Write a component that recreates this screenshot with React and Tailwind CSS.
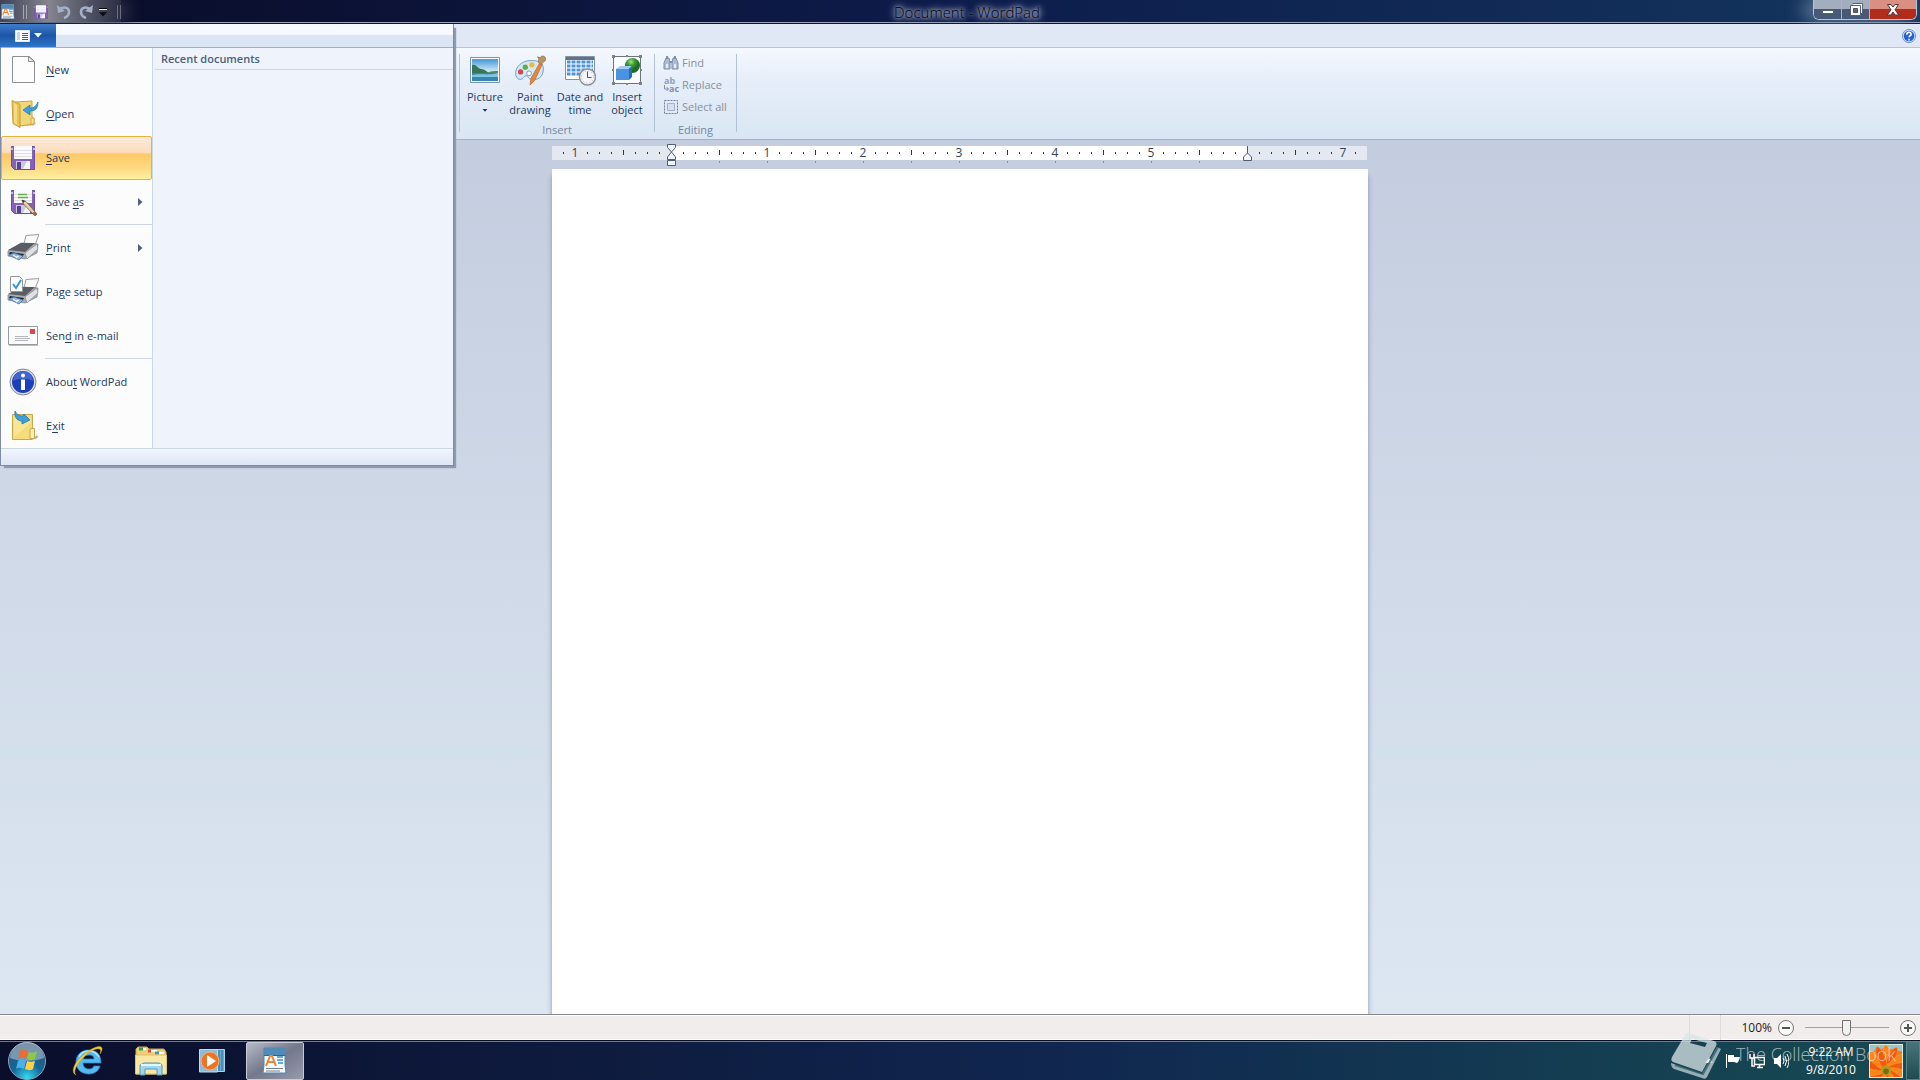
const INCH = 96
const ZERO = 119

function WordPadIcon({ className }) {
  return (
    <svg viewBox="0 0 24 28" className={className} aria-hidden="true">
      <path d="M1 1h21v17l1 8H0l1-8z" fill="#f4f9fd" stroke="#4d86ad" strokeWidth="1" />
      <path d="M1 1h21v7H1z" fill="#4f8cb8" />
      <path d="M1 8h21v1H1z" fill="#2f6590" />
      <path d="M3 19 7 9h2l4 10M5 15h6" fill="none" stroke="#e8863c" strokeWidth="2" />
      <path d="M14 10h6M14 13h6M15 16h5" stroke="#3e8cc8" strokeWidth="1.500" />
      <path d="M3 21.500h17M3 24h14" stroke="#777f88" strokeWidth="1" />
    </svg>
  )
}

function FloppyIcon({ className, pencil }) {
  return (
    <svg viewBox="0 0 32 32" className={className} aria-hidden="true">
      <path d="M4.500 4.500h23v23h-20l-3-3z" fill="#8560bd" stroke="#6b4fa3" />
      <path d="M7 4h18v13H7z" fill="#fafafd" />
      <path d="M7 8.500h18M7 11.500h18M7 14.500h18" stroke="#dedee6" />
      <path d="M9 19h14v8H9z" fill="#c9cbd8" />
      <path d="M10 20h4v7h-4z" fill="#5b4290" />
      <path d="M16 27l4-8h3v8z" fill="#f4f5fa" />
      <path d="M4 7h2M26 7h2" stroke="#cdb9ec" strokeWidth="2" />
      {pencil && (
        <g>
          <path d="M11 8.500h9M11 11.500h10" stroke="#5fb04d" strokeWidth="1.500" />
          <path d="M15 14l4 1.500 11 12.500-2 2-11.500-12z" fill="#e8d49c" stroke="#6f5a35" strokeWidth=".800" />
          <path d="M15 14l3 1-2 2z" fill="#333" />
          <path d="M27.500 25.500l2.500 3-1.500 1.500-3-3z" fill="#a65f50" />
        </g>
      )}
    </svg>
  )
}

function NewIcon() {
  return (
    <svg viewBox="0 0 32 32" className="size-8" aria-hidden="true">
      <path d="M5.500 2.500h17l5 5v21h-22z" fill="#fdfdfd" stroke="#8e9094" />
      <path d="M21.500 2.500v5h6z" fill="#e9ebee" stroke="#8e9094" />
    </svg>
  )
}

function OpenIcon() {
  return (
    <svg viewBox="0 0 32 32" className="size-8" aria-hidden="true">
      <path d="M8 28h18c3-1 4-3 2-4l-4-2z" fill="#9a9a92" opacity=".4" />
      <path d="M8 4l17-1v16l2 1v6l-14 2z" fill="#f2d77a" stroke="#cba441" />
      <path d="M5 2.500l8 4v23l-7-4z" fill="#e9c453" stroke="#c79e34" />
      <path d="M7 5l3 2v20l-3-2z" fill="#f8e598" opacity=".7" />
      <path d="M24 20h3v6h-3z" fill="#f8e69c" stroke="#d0aa4c" />
      <path d="M16 12l7-5v3c4 0 6-2 8-6 0 7-3 9-8 9v4z" fill="#3aa0da" stroke="#2277aa" strokeWidth=".700" />
    </svg>
  )
}

function PrinterIcon({ page }) {
  return (
    <svg viewBox="0 0 32 32" className="size-8" aria-hidden="true">
      <path d="M19 3.500l13-1-5 13h-11z" fill="#fafafa" stroke="#999da2" />
      <path d="M1 19l13-8 17 1-1 9-12 6-17-3z" fill="#a9adb2" stroke="#787d83" strokeWidth=".700" />
      <path d="M1 18l13-7h14l-10 9z" fill="#5a5e64" />
      <path d="M18 21l12-9 1 5-11 10z" fill="#dfe1e4" stroke="#85898d" strokeWidth=".700" />
      <path d="M3 20l14 2-1 2-14-2z" fill="#24272c" />
      <path d="M2 23l5-2 9 3-4 4z" fill="#8eb7e4" stroke="#4775ad" strokeWidth=".800" />
      <path d="M6 23l3 2 2-1M9 26l3-2" fill="none" stroke="#fff" />
      {page && (
        <g>
          <path d="M3.500.500h9l3 3v12h-12z" fill="#fff" stroke="#92969b" />
          <path d="M6 8l3 4 5-8" fill="none" stroke="#3699cb" strokeWidth="2" />
        </g>
      )}
    </svg>
  )
}

function MailIcon() {
  return (
    <svg viewBox="0 0 32 32" className="size-8" aria-hidden="true">
      <path d="M2 25.500h29" stroke="#bdbdbd" />
      <path d="M1.500 6.500h29v18h-29z" fill="#fbfbfb" stroke="#98999d" />
      <path d="M23 9h5v5h-5z" fill="#d94b4b" />
      <path d="M8 16.500h13M8 18.500h15M8 20.500h13" stroke="#b5b6ba" />
    </svg>
  )
}

function InfoIcon() {
  return (
    <svg viewBox="0 0 32 32" className="size-8" aria-hidden="true">
      <circle cx="16" cy="16" r="13" fill="#d9dee8" stroke="#848b99" />
      <circle cx="16" cy="16" r="11" fill="#1c3fba" />
      <path d="M6 15a10 10 0 0 1 20 0c-5-3-14-3-20 0z" fill="#5076dd" opacity=".7" />
      <circle cx="16" cy="9.500" r="2" fill="#fff" />
      <path d="M14 13.500h4V24h-4z" fill="#fff" />
    </svg>
  )
}

function ExitIcon() {
  return (
    <svg viewBox="0 0 32 32" className="size-8" aria-hidden="true">
      <path d="M27 28l3-3 1 2-2 2z" fill="#aaa" />
      <path d="M5.500 4.500h20v25h-20z" fill="#f6dc79" stroke="#c9a74b" />
      <path d="M7 8h17v5L7 27z" fill="#faeaa0" opacity=".7" />
      <path d="M24 18.500h3.500v10H23V20z" fill="#fbf0bd" stroke="#c9a74b" />
      <path d="M8 1c2 4 5 5 8 5l1-2 6 6-8 4v-3C10 11 7 7 8 1z" fill="#3da0dc" stroke="#236fa5" strokeWidth=".700" />
    </svg>
  )
}

function PictureIcon() {
  return (
    <svg viewBox="0 0 32 32" className="size-8" aria-hidden="true">
      <defs>
        <linearGradient id="sky" x2="0" y2="1">
          <stop offset="0" stopColor="#4398d8" />
          <stop offset="1" stopColor="#e2f4fa" />
        </linearGradient>
      </defs>
      <path d="M1.500 3.500h29v25h-29z" fill="#fff" stroke="#7893aa" />
      <path d="M3 5h26v14H3z" fill="url(#sky)" />
      <path d="M3 19h26v8H3z" fill="#3685b5" />
      <path d="M3 21c8-2 16 1 26-2v4H3z" fill="#7fc6dc" />
      <path d="M3 11c4-1 5 3 9 4 3 0 5 2 8 4H3z" fill="#387556" />
      <path d="M18 19c3-2 7-2 11-2v2z" fill="#508b68" />
    </svg>
  )
}

function PaintIcon() {
  return (
    <svg viewBox="0 0 34 32" className="h-8 w-8" aria-hidden="true">
      <path d="M2 22C0 12 10 5 20 6c9 0 12 5 11 11-1 7-6 10-12 9-4 0-4-4-6-4-3 0-3 4-6 4-3 0-4-2-5-4z" fill="#d4e9f8" stroke="#6b9bc0" />
      <circle cx="7" cy="18" r="2.800" fill="#d54848" />
      <circle cx="12" cy="13" r="2.800" fill="#62ad3e" />
      <circle cx="19" cy="10.500" r="2.800" fill="#e9bb3d" />
      <circle cx="16" cy="19.500" r="2.500" fill="#fff" stroke="#6b9bc0" />
      <path d="M27 9l3 1-8 17-5 5 1-7z" fill="#e8863a" stroke="#b6602a" strokeWidth=".700" />
      <path d="M26 8c0-3 1-3-1-6l3 1c1-3 5-2 6 1 0 3-3 3-5 6z" fill="#bd9461" stroke="#8a673e" strokeWidth=".700" />
    </svg>
  )
}

function DateIcon() {
  return (
    <svg viewBox="0 0 32 32" className="size-8" aria-hidden="true">
      <path d="M1.500 2.500h29v23h-29z" fill="#fff" stroke="#8093a8" />
      <path d="M2 3h28v3H2z" fill="#66717d" />
      <path d="M3 8h26M3 12h26M3 16h26M3 20h26" stroke="#4e93dd" strokeWidth="2.800" />
      <path d="M7 6v17M12 6v17M17 6v17M22 6v17M27 6v17" stroke="#fff" />
      <circle cx="23.500" cy="23" r="8" fill="#f4f5f6" stroke="#8c9195" strokeWidth="1.500" />
      <circle cx="23.500" cy="23" r="6" fill="none" stroke="#b0b4b8" strokeDasharray="1 2.140" />
      <path d="M23.500 17.500v6h4" fill="none" stroke="#53575c" />
    </svg>
  )
}

function ObjectIcon() {
  return (
    <svg viewBox="0 0 32 32" className="size-8" aria-hidden="true">
      <defs>
        <radialGradient id="ball" cx=".4" cy=".25">
          <stop offset="0" stopColor="#a3e582" />
          <stop offset=".5" stopColor="#3a9f35" />
          <stop offset="1" stopColor="#1c7026" />
        </radialGradient>
      </defs>
      <path d="M2.500 2.500h27v27h-27z" fill="#fbfcfe" stroke="#6f757d" />
      <path d="M1 1h3v3H1zM15 1h2v2h-2zM28 1h3v3h-3zM1 15h2v2H1zM29 15h2v2h-2zM1 28h3v3H1zM15 29h2v2h-2zM28 28h3v3h-3z" fill="#7d838b" />
      <circle cx="21.500" cy="11.500" r="7.500" fill="url(#ball)" />
      <path d="M5 15l4-3h12l-3 3z" fill="#9fccf7" />
      <path d="M5 15h13v11H5z" fill="#4b93e2" />
      <path d="M18 15l3-3v11l-3 3z" fill="#276cba" />
    </svg>
  )
}

function FindIcon() {
  return (
    <svg viewBox="0 0 16 16" className="size-4" aria-hidden="true">
      <path d="M1 14V8l2-5h3l1 5v6zM9 14V8l1-5h3l2 5v6z" fill="#aebdd2" stroke="#7c8daa" />
      <path d="M4 1v3M12 1v3M7 7h2" stroke="#7c8daa" strokeWidth="2" />
      <path d="M3 9h2v4H3zM11 9h2v4h-2z" fill="#e5ebf3" />
    </svg>
  )
}

function ReplaceIcon() {
  return (
    <svg viewBox="0 0 16 16" className="size-4 overflow-visible" aria-hidden="true">
      <text x="1" y="7" fontSize="9" fontWeight="700" fill="#8fa0bd">ab</text>
      <text x="6" y="15" fontSize="9" fontWeight="700" fill="#8091b0">ac</text>
      <path d="M1.500 8v4h4M3.500 10l2 2-2 2" fill="none" stroke="#8091b0" />
    </svg>
  )
}

function SelectAllIcon() {
  return (
    <svg viewBox="0 0 16 16" className="size-4" aria-hidden="true">
      <path d="M1.500 1.500h13v13h-13z" fill="none" stroke="#6f7f99" strokeDasharray="2 1" />
      <path d="M4.500 4.500h7v7h-7z" fill="#d8e0ec" stroke="#a3b0c6" />
    </svg>
  )
}

function UndoIcon({ flip }) {
  return (
    <svg viewBox="0 0 16 16" className={flip ? 'size-4 -scale-x-100' : 'size-4'} aria-hidden="true">
      <path d="M4 5c5-3 9-1 9 3 0 3-2 5-5 6" fill="none" stroke="#a3b2c9" strokeWidth="2.600" />
      <path d="M1 1l1 8 7-2z" fill="#a3b2c9" />
    </svg>
  )
}

function CaretDown({ className }) {
  return (
    <svg viewBox="0 0 8 5" className={className} aria-hidden="true">
      <path d="M0 0h8L4 4.500z" fill="currentColor" />
    </svg>
  )
}

function TitleBar() {
  return (
    <header className="flex h-6 shrink-0 items-center border-b border-[#10142b] bg-linear-to-r from-[#0a0c28] via-[#0d1c4b] to-[#14365e] text-[#0a0d1a] shadow-[inset_0_-1px_0_#9aa3b8]">
      <div className="flex h-[22px] w-[121px] items-center gap-1 self-start bg-linear-to-r from-[#3f4256] via-[#85858f] via-40% to-[#2b2d43] pt-0.5 pl-px shadow-[8px_0_14px_#2b2d43]">
        <WordPadIcon className="h-4 w-3.5" />
        <span className="mr-px ml-1 h-3.5 w-1 border-x border-[#a5a6b0]" />
        <button aria-label="Save"><FloppyIcon className="size-[18px]" /></button>
        <button aria-label="Undo" className="pl-0.5"><UndoIcon /></button>
        <button aria-label="Redo" className="pl-0.5"><UndoIcon flip /></button>
        <button aria-label="Customize Quick Access Toolbar" className="flex flex-col items-center gap-0.5 pl-px">
          <span className="h-0.5 w-2 border-b border-white bg-black" />
          <CaretDown className="h-[5px] w-2" />
        </button>
        <span className="ml-1.5 h-3.5 w-1 shrink-0 border-x border-[#6c6f80]" />
      </div>
      <h1 className="flex-1 text-center text-[15px]/5 font-light">
        <span className="text-black [text-shadow:0_0_3px_#aab1c8,0_0_5px_#a2aac3,0_0_7px_#9ba3bd,0_0_9px_#8c95b2,0_0_12px_#8c95b2]">Document - WordPad</span>
      </h1>
      <div className="mr-[3px] flex h-5 self-start overflow-hidden rounded-b-md border border-t-0 border-[#b9c4d3] shadow-[-8px_0_20px_#718aa8]">
        <button aria-label="Minimize" className="flex w-7 items-center justify-center border-r border-[#a8b5c7] bg-linear-to-b from-[#a2aec0] from-45% to-[#465a78] to-50%">
          <svg viewBox="0 0 14 12" className="h-3 w-3.5"><path d="M1.500 6.500h11v3h-11z" fill="#fff" stroke="#565f70" /></svg>
        </button>
        <button aria-label="Restore" className="flex w-7 items-center justify-center border-r border-[#a8b5c7] bg-linear-to-b from-[#a2aec0] from-45% to-[#465a78] to-50%">
          <svg viewBox="0 0 14 14" className="size-3.5">
            <path d="M3.500.500h10v10h-2" fill="#fff" stroke="#565f70" />
            <path d="M1.500 2.500h10v10h-10z" fill="#fff" stroke="#565f70" />
            <path d="M4.500 5.500h4v4h-4z" fill="#5b6a80" stroke="#465368" />
          </svg>
        </button>
        <button aria-label="Close" className="flex w-[46px] items-center justify-center bg-linear-to-b from-[#d98f82] from-45% to-[#b22c1b] to-50%">
          <svg viewBox="0 0 14 12" className="h-3 w-3.5">
            <path d="M1.500.500h3.500l2 2.500 2-2.500h3.500L9 5.800l3.800 5.200H9L7 8l-2 3H1.200L5 5.800z" fill="#fff" stroke="#5e3237" />
          </svg>
        </button>
      </div>
    </header>
  )
}

function BigButton({ icon, lines, caret, className }) {
  return (
    <button className={`flex flex-col items-center text-[11px]/[13px] text-[#1e395b] ${className}`}>
      {icon}
      <span className="mt-1">{lines[0]}</span>
      {lines[1] && <span>{lines[1]}</span>}
      {caret && <CaretDown className="mt-1.5 h-[3px] w-1.5" />}
    </button>
  )
}

function SmallButton({ icon, label }) {
  return (
    <button className="flex h-[22px] items-center gap-[3px] text-[11px]/4 text-[#8a8f98]">
      {icon}
      {label}
    </button>
  )
}

function Divider() {
  return <span className="mt-0.5 h-[78px] w-px bg-[#b3c1d5]" />
}

function Ribbon() {
  return (
    <section>
      <div className="flex h-6 items-center justify-end border-b border-[#b7c5da] bg-[#dfe8f4] pr-1">
        <button aria-label="Help">
          <svg viewBox="0 0 16 16" className="size-3.5">
            <circle cx="8" cy="8" r="7.500" fill="#d7e3fa" stroke="#6387cf" />
            <circle cx="8" cy="8" r="6" fill="#2560d4" />
            <path d="M5.500 6.500c0-3.500 5-3.500 5-.500 0 2-2.500 1.500-2.500 3.500M8 11v2" fill="none" stroke="#fff" strokeWidth="1.800" />
          </svg>
        </button>
      </div>
      <div className="flex h-[92px] border-b border-[#a3b2c7] bg-linear-to-b from-[#f5f9ff] via-[#e6eef9] via-35% to-[#dae6f4] pt-1 pb-[3px] pl-[459px]">
        <Divider />
        <div className="flex w-[194px] flex-col items-center">
          <div className="flex w-full flex-1 items-start pt-0.5 pl-[3px]">
            <BigButton className="w-11" icon={<PictureIcon />} lines={['Picture']} caret />
            <BigButton className="w-[46px]" icon={<PaintIcon />} lines={['Paint', 'drawing']} />
            <BigButton className="w-[54px]" icon={<DateIcon />} lines={['Date and', 'time']} />
            <BigButton className="w-10" icon={<ObjectIcon />} lines={['Insert', 'object']} />
          </div>
          <div className="text-[11px]/3 text-[#7586a0]">Insert</div>
        </div>
        <Divider />
        <div className="flex w-[81px] flex-col items-center">
          <div className="w-full flex-1 pl-2">
            <SmallButton icon={<FindIcon />} label="Find" />
            <SmallButton icon={<ReplaceIcon />} label="Replace" />
            <SmallButton icon={<SelectAllIcon />} label="Select all" />
          </div>
          <div className="text-[11px]/3 text-[#7586a0]">Editing</div>
        </div>
        <Divider />
      </div>
    </section>
  )
}

function Ruler() {
  const ticks = []
  for (let i = -9; i <= 57; i++) {
    if (i === 0 || i === 48) continue
    const x = ZERO + i * 12
    if (i % 8 === 0) {
      ticks.push(
        <text key={i} x={x} y="17" textAnchor="middle" fontSize="12" fill="#34415c">
          {Math.abs(i / 8)}
        </text>
      )
    } else {
      const half = i % 4 === 0
      ticks.push(<rect key={i} x={x} y={half ? 10 : 12} width="1" height={half ? 5 : 2} fill="#2e3442" />)
    }
    if (i > 0 && i < 48 && i % 4 === 0) {
      ticks.push(<rect key={`tab${i}`} x={x} y="21" width="1" height="2" fill="#8593a9" />)
    }
  }

  return (
    <svg viewBox="0 0 816 29" className="mx-auto block h-[29px] w-[816px] shrink-0" role="img" aria-label="Ruler">
      <rect y="6" width="815" height="14" fill="#e4e8f0" />
      <rect x={ZERO} y="6" width={6 * INCH} height="14" fill="#fff" />
      {ticks}
      <g fill="#f2f6fc" stroke="#4f5e78">
        <path d="M115.500 4.500h8v3l-4 4.500-4-4.500z" />
        <path d="M119.500 12l4 5v2.500h-8V17z" />
        <path d="M115.500 20.500h8v5h-8z" />
        <path d="M695.500 6v7" />
        <path d="M695.500 13l4 4v3.500h-8V17z" />
      </g>
    </svg>
  )
}

const menuItems = [
  { icon: <NewIcon />, before: '', key: 'N', after: 'ew' },
  { icon: <OpenIcon />, before: '', key: 'O', after: 'pen' },
  { icon: <FloppyIcon className="size-8" />, before: '', key: 'S', after: 'ave', active: true },
  { icon: <FloppyIcon className="size-8" pencil />, before: 'Save ', key: 'a', after: 's', arrow: true, line: true },
  { icon: <PrinterIcon />, before: '', key: 'P', after: 'rint', arrow: true },
  { icon: <PrinterIcon page />, before: 'Pa', key: 'g', after: 'e setup' },
  { icon: <MailIcon />, before: 'Sen', key: 'd', after: ' in e-mail', line: true },
  { icon: <InfoIcon />, before: 'Abou', key: 't', after: ' WordPad' },
  { icon: <ExitIcon />, before: 'E', key: 'x', after: 'it' },
]

function MenuItem({ item }) {
  return (
    <li>
      <button
        className={`flex h-11 w-full items-center rounded-xs border pl-[5px] text-[11px]/4 text-[#1e395b] ${
          item.active
            ? 'border-[#e3b53c] bg-[linear-gradient(#fbeade,#fbdcb8_38%,#fdc965_40%,#fed77e_70%,#fff0a0)]'
            : 'border-transparent'
        }`}
      >
        {item.icon}
        <span className="flex-1 pl-[7px] text-left whitespace-pre">
          {item.before}
          <span className="underline underline-offset-2">{item.key}</span>
          {item.after}
        </span>
        {item.arrow && (
          <svg viewBox="0 0 5 8" className="mr-2 h-2 w-[5px]" aria-hidden="true">
            <path d="M0 0l4.500 4L0 8z" fill="#52617c" />
          </svg>
        )}
      </button>
      {item.line && <div className="ml-11 h-0.5 border-t border-[#cdd6e3]" />}
    </li>
  )
}

function FileMenu() {
  return (
    <div className="absolute top-6 left-0 z-10 w-[454px] border-r border-b border-l border-[#7d8ba5] bg-[#eff4fc] shadow-[3px_3px_1px_-1px_#8e9ab0]">
      <div className="h-6 border-b border-[#9fb0cb] bg-linear-to-b from-[#f6f9ff] from-45% to-[#dbe5f4] to-50%">
        <button
          aria-label="WordPad menu"
          className="-ml-px flex h-[23px] w-14 items-center justify-center gap-1 bg-linear-to-b from-[#3f7dc8] via-[#1c55a8] via-50% to-[#2f76c9] text-white"
        >
          <svg viewBox="0 0 15 12" className="h-3 w-[15px]">
            <path d="M.500.500h14v11H.500z" fill="#fff" stroke="#dfe9f8" />
            <path d="M2 2h3v8H2z" fill="#c5d6ee" />
            <path d="M7 3.500h6M7 5.500h6M7 7.500h6M7 9.500h6" stroke="#2a5ca8" />
          </svg>
          <CaretDown className="h-[5px] w-2" />
        </button>
      </div>
      <div className="flex">
        <ul className="w-[152px] border-r border-[#cdd6e3] bg-[#fcfcfd]">
          {menuItems.map((item, index) => (
            <MenuItem key={index} item={item} />
          ))}
        </ul>
        <div className="flex-1 pl-0.5">
          <h2 className="h-[22px] border-b border-[#cdd6e3] pl-1.5 text-[11px]/[22px] font-semibold text-[#4c607a]">Recent documents</h2>
        </div>
      </div>
      <div className="h-[17px] border-t border-[#cdd6e3] bg-linear-to-b from-[#f1f5fd] to-[#dde6f5]" />
    </div>
  )
}

function ZoomButton({ label, plus }) {
  return (
    <button aria-label={label}>
      <svg viewBox="0 0 18 18" className="size-[18px]">
        <circle cx="9" cy="9" r="7.500" fill="#f8f8f8" stroke="#777" />
        <path d={plus ? 'M5 9h8M9 5v8' : 'M5 9h8'} stroke="#555" strokeWidth="2" />
      </svg>
    </button>
  )
}

function StatusBar() {
  return (
    <footer className="flex h-[26px] shrink-0 items-center justify-end border-t border-[#85868f] bg-[#f0edec] pr-[3px] shadow-[inset_0_1px_0_#fff,inset_0_-1px_0_#fff]">
      <div className="h-full w-8 border-x border-[#dfdcdc]" />
      <label htmlFor="zoom" className="w-14 pr-[5px] text-right text-xs/4 text-[#1c1c1c]">100%</label>
      <ZoomButton label="Zoom out" />
      <input
        id="zoom"
        type="range"
        defaultValue="49"
        className="mx-2.5 h-4 w-[84px] appearance-none bg-[linear-gradient(#a2a2a2,#a2a2a2)] bg-[length:100%_1px] bg-center bg-no-repeat [&::-webkit-slider-thumb]:h-4 [&::-webkit-slider-thumb]:w-[9px] [&::-webkit-slider-thumb]:appearance-none [&::-webkit-slider-thumb]:rounded-t-xs [&::-webkit-slider-thumb]:rounded-b-full [&::-webkit-slider-thumb]:border [&::-webkit-slider-thumb]:border-[#707070] [&::-webkit-slider-thumb]:bg-[#f1f1f1]"
      />
      <ZoomButton label="Zoom in" plus />
    </footer>
  )
}

function StartOrb() {
  return (
    <svg viewBox="0 0 40 40" className="size-10" aria-hidden="true">
      <defs>
        <radialGradient id="orb" cx=".5" cy=".95" r=".9">
          <stop offset="0" stopColor="#34dcf5" />
          <stop offset=".45" stopColor="#14679b" />
          <stop offset="1" stopColor="#33516e" />
        </radialGradient>
      </defs>
      <circle cx="20" cy="20" r="18.500" fill="url(#orb)" stroke="#8aa4b8" />
      <path d="M3 17a17 16 0 0 1 34 0c-10 4-24 4-34 0z" fill="#c3d7e2" opacity=".5" />
      <path d="M13 10c3-2 5-1 8 0l-2 8c-3-1-5-2-8 0z" fill="#ef6a35" />
      <path d="M22 11c3 1 5 1 8-1l-2 8c-3 2-5 1-8 0z" fill="#8fc841" />
      <path d="M11 20c3-2 5-1 8 0l-2 8c-3-1-5-2-8 0z" fill="#4bb2ed" />
      <path d="M20 20c3 1 5 1 8 0l-2 8c-3 2-5 1-8 0z" fill="#ffd045" />
    </svg>
  )
}

function ExplorerEIcon() {
  return (
    <svg viewBox="0 0 32 32" className="size-8" aria-hidden="true">
      <path d="M29 21c-1 5-6 8-11 8C10 29 5 24 5 17S10 5 18 5s12 5 12 13H12c0 4 3 6 6 6 3 0 4-1 5-3zM12 14h11c0-3-2-4-5-4s-5 1-6 4z" fill="#56b9ef" stroke="#2c83c6" strokeWidth=".800" />
      <path d="M8 12c2-4 5-6 9-6 5 0 9 2 11 6" fill="none" stroke="#b8e6fc" strokeWidth="1.500" />
      <path d="M5 30c-5-2-3-10 4-17S26 0 30 2c2 1 1 4-1 7 1-3 1-5-1-5-3-1-11 3-17 10-6 6-9 13-6 16z" fill="#f6cd35" stroke="#c99a1f" strokeWidth=".500" />
    </svg>
  )
}

function FolderIcon() {
  return (
    <svg viewBox="0 0 34 32" className="h-8 w-[34px]" aria-hidden="true">
      <path d="M2 4l2-2h9l2 2h15l2 3v22H2z" fill="#efd077" stroke="#c9a64e" />
      <path d="M5 4h7M14 6h9M21 8h9" stroke="#fff" strokeWidth="2" />
      <path d="M5 4h4" stroke="#339955" strokeWidth="3" />
      <path d="M14 6h3" stroke="#d44" strokeWidth="3" />
      <path d="M21 8h4" stroke="#3399cc" strokeWidth="3" />
      <path d="M1.500 10h31v19h-31z" fill="#f9e7a4" stroke="#ddc26c" />
      <path d="M6 30V20l4-2h15l3 2v10h-5v-6H11v6z" fill="#9fd7ee" stroke="#5495bd" />
      <path d="M7 20h20" stroke="#dff6fd" strokeWidth="2" />
    </svg>
  )
}

function MediaIcon() {
  return (
    <svg viewBox="0 0 28 26" className="h-[26px] w-7" aria-hidden="true">
      <path d="M6 1.500h20.500v22H6z" fill="#65a9d0" stroke="#a6d4ec" />
      <path d="M21 2v21M24 2v21" stroke="#2e759f" />
      <path d="M1.500 1.500h18v22.500h-18z" fill="#8bbcd9" stroke="#b9deef" />
      <circle cx="12" cy="13" r="9" fill="#ee7424" stroke="#f7b27c" />
      <path d="M9 7l9 6-9 6z" fill="#fff" />
    </svg>
  )
}

function TrayIcons() {
  return (
    <div className="flex items-center gap-2">
      <svg viewBox="0 0 8 5" className="mr-1 h-[5px] w-2"><path d="M0 5l4-5 4 5z" fill="#fff" /></svg>
      <svg viewBox="0 0 16 16" className="size-4">
        <path d="M1.500 1v14" stroke="#fff" />
        <path d="M3 2h6v2h6c-1 3-1 4-3 6l-3-1H3z" fill="#fff" />
      </svg>
      <svg viewBox="0 0 16 16" className="size-4">
        <path d="M5.500 4.500h10v7h-10zM8 14.500h6M10.500 12v2" fill="#174653" stroke="#fff" strokeWidth="1.500" />
        <path d="M1 1v4h4V1M3 5v8h3" fill="none" stroke="#fff" strokeWidth="1.500" />
      </svg>
      <svg viewBox="0 0 16 16" className="size-4">
        <path d="M1 5h3l4-4v14l-4-4H1z" fill="#fff" />
        <path d="M10 5q2 3 0 6M12 3q3 5 0 10M14 1q4 7 0 14" fill="none" stroke="#fff" />
      </svg>
    </div>
  )
}

function Avatar() {
  const petals = Array.from({ length: 14 }, (_, i) => i * 26)
  return (
    <svg viewBox="0 0 34 34" className="size-[34px] border border-[#dce9dc]" role="img" aria-label="User">
      <rect width="34" height="34" fill="#f27a1c" />
      <path d="M0 0h34v7L17 3 0 7z" fill="#9cc6ce" />
      {petals.map((a, i) => (
        <ellipse key={a} cx="17" cy="13" rx="4" ry="13" fill={i % 2 ? '#f2590f' : '#fb8516'} stroke="#ffae38" strokeWidth=".500" transform={`rotate(${a} 17 26)`} />
      ))}
      <circle cx="17" cy="27" r="5.500" fill="#b59a1d" />
      <circle cx="17" cy="28" r="3" fill="#716d1c" />
    </svg>
  )
}

function Watermark() {
  return (
    <div className="pointer-events-none absolute right-6 bottom-0 z-20 flex h-12 items-center gap-3.5 text-white/60">
      <svg viewBox="0 0 52 48" className="h-12 w-[52px]" aria-hidden="true">
        <path fillRule="evenodd" d="M18 1l26 8c3 1 3 3 2 5L32 40 3 30c-2-1-2-3-1-5L15 3c1-2 2-2 3-2zM22 7l-2 4 15 4 2-4z" fill="#d9e5e8" opacity=".75" />
        <path d="M47 15l4 2-14 28c-1 2-3 2-5 1L4 37c-2-1-3-3-3-6l31 11z" fill="#c4d3d7" opacity=".75" />
        <path d="M5 33l28 9 15-27" fill="none" stroke="#24535f" strokeWidth="2" opacity=".7" />
      </svg>
      <span className="pb-1 text-lg/6 font-light">The Collection Book</span>
    </div>
  )
}

function Taskbar() {
  return (
    <div className="flex h-10 shrink-0 items-center border-t border-[#0a0f24] bg-linear-to-r from-[#0a0e2b] via-[#10264f] via-55% to-[#184b52] shadow-[inset_0_1px_0_#667c98]">
      <button aria-label="Start" className="ml-[7px]"><StartOrb /></button>
      <button aria-label="Internet Explorer" className="ml-6"><ExplorerEIcon /></button>
      <button aria-label="Windows Explorer" className="ml-[31px]"><FolderIcon /></button>
      <button aria-label="Media Player" className="ml-[30px]"><MediaIcon /></button>
      <button
        aria-label="WordPad"
        className="ml-5 flex h-[38px] w-[58px] items-center justify-center rounded-xs border border-[#c8cbd6] bg-linear-to-br from-[#b9bbc7] via-[#74788c] to-[#989bab]"
      >
        <WordPadIcon className="h-7 w-6" />
      </button>
      <div className="ml-auto flex h-full items-center">
        <TrayIcons />
        <div className="w-20 pl-1 text-center text-xs/[18px] text-white">
          <div>9:22 AM</div>
          <div>9/8/2010</div>
        </div>
        <Avatar />
        <button aria-label="Show desktop" className="ml-[3px] h-full w-3.5 border border-[#5c8286] bg-linear-to-b from-[#47757a] to-[#1c4c50]" />
      </div>
    </div>
  )
}

export default function App() {
  return (
    <div className="relative flex h-screen flex-col overflow-hidden font-['Open_Sans',sans-serif]">
      <TitleBar />
      <Ribbon />
      <main className="flex min-h-0 flex-1 flex-col bg-linear-to-b from-[#c4cddf] to-[#dce7f2]">
        <Ruler />
        <div
          role="textbox"
          aria-label="Document"
          className="mx-auto w-[816px] flex-1 bg-white shadow-[0_6px_5px_#8797b3]"
        />
      </main>
      <StatusBar />
      <Taskbar />
      <FileMenu />
      <Watermark />
    </div>
  )
}
